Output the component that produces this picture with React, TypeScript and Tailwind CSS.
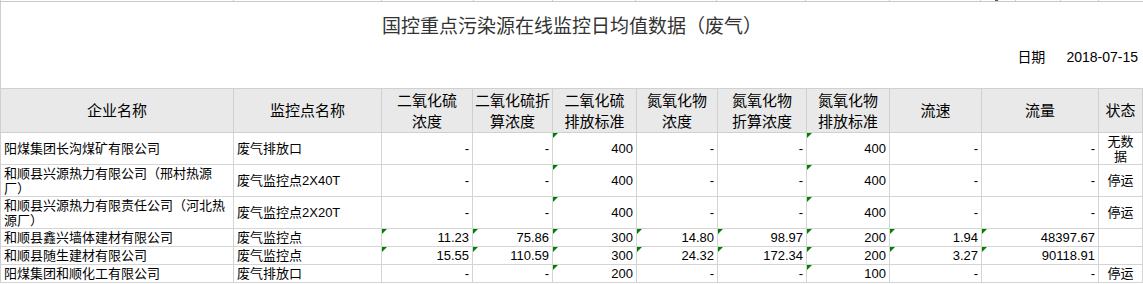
import React from "react";

const headers: React.ReactNode[] = [
  "企业名称",
  "监控点名称",
  <>二氧化硫<br />浓度</>,
  <>二氧化硫折<br />算浓度</>,
  <>二氧化硫<br />排放标准</>,
  <>氮氧化物<br />浓度</>,
  <>氮氧化物<br />折算浓度</>,
  <>氮氧化物<br />排放标准</>,
  "流速",
  "流量",
  "状态",
];

const rows: React.ReactNode[][] = [
  ["阳煤集团长沟煤矿有限公司", "废气排放口", "-", "-", "400", "-", "-", "400", "-", "-", <>无数<br />据</>],
  [<>和顺县兴源热力有限公司（邢村热源<br />厂）</>, "废气监控点2X40T", "-", "-", "400", "-", "-", "400", "-", "-", "停运"],
  [<>和顺县兴源热力有限责任公司（河北热<br />源厂）</>, "废气监控点2X20T", "-", "-", "400", "-", "-", "400", "-", "-", "停运"],
  ["和顺县鑫兴墙体建材有限公司", "废气监控点", "11.23", "75.86", "300", "14.80", "98.97", "200", "1.94", "48397.67", ""],
  ["和顺县随生建材有限公司", "废气监控点", "15.55", "110.59", "300", "24.32", "172.34", "200", "3.27", "90118.91", ""],
  ["阳煤集团和顺化工有限公司", "废气排放口", "-", "-", "200", "-", "-", "100", "-", "-", "停运"],
];

const alignFor = (c: number) =>
  c < 2
    ? "justify-start text-left pl-[3px] pr-[2px]"
    : c === 10
    ? "justify-center text-center"
    : "justify-end text-right pr-[3px]";

const hasTri = (r: number, c: number) =>
  c === 4 || c === 7 || ((r === 3 || r === 4) && c >= 2 && c <= 9);

function Tri() {
  return (
    <svg className="absolute left-0 top-0" width="5" height="5" viewBox="0 0 5 5">
      <polygon points="0,0 5,0 0,5" fill="#008000" />
    </svg>
  );
}

const ticks = [233, 148, 92, 79, 83, 81, 89, 84, 91, 35, 45, 38, 45];

export default function App() {
  return (
    <div className="w-[1143px] h-[284px] bg-white text-black font-['Liberation_Sans','Noto_Sans_CJK_SC',sans-serif] overflow-hidden">
      {/* top strip */}
      <div className="flex h-[2px] border-b border-[#c8c8c8]">
        {ticks.map((w, i) => (
          <div key={i} className="relative h-[1px] border-l border-[#cfcfcf] shrink-0" style={{ width: w }}>
            {i === 9 && <div className="absolute left-[14px] top-0 w-[3px] h-[1px] bg-[#555]" />}
          </div>
        ))}
      </div>
      {/* title area */}
      <div className="h-[86px] border-l border-[#cfcfcf] flex flex-col">
        <div className="pt-[13px] h-[37px] text-center text-[19px] leading-[24px] text-[#333]">
          国控重点污染源在线监控日均值数据（废气）
        </div>
        <div className="mt-[9px] flex justify-end pr-[5px] text-[14px] leading-[18px] gap-[21px]">
          <span>日期</span>
          <span>2018-07-15</span>
        </div>
      </div>
      {/* table */}
      <div className="grid grid-cols-[233px_148px_91px_80px_84px_81px_89px_83px_92px_117px_44px] grid-rows-[44px_32px_32px_32px_18px_18px_18px] border-l border-t border-[#d0d0d0] w-[1143px]">
        {headers.map((h, i) => (
          <div
            key={"h" + i}
            className="flex items-center justify-center text-center bg-[#e9e9e9] border-r border-b border-[#d0d0d0] text-[15px] leading-[21px]"
          >
            <span>{h}</span>
          </div>
        ))}
        {rows.map((row, r) =>
          row.map((cell, c) => (
            <div
              key={r + "-" + c}
              className={
                "relative flex items-center border-r border-b border-[#d4d4d4] text-[13px] leading-[15px] whitespace-nowrap " +
                alignFor(c)
              }
            >
              {hasTri(r, c) && <Tri />}
              <span>{cell}</span>
            </div>
          ))
        )}
      </div>
    </div>
  );
}
